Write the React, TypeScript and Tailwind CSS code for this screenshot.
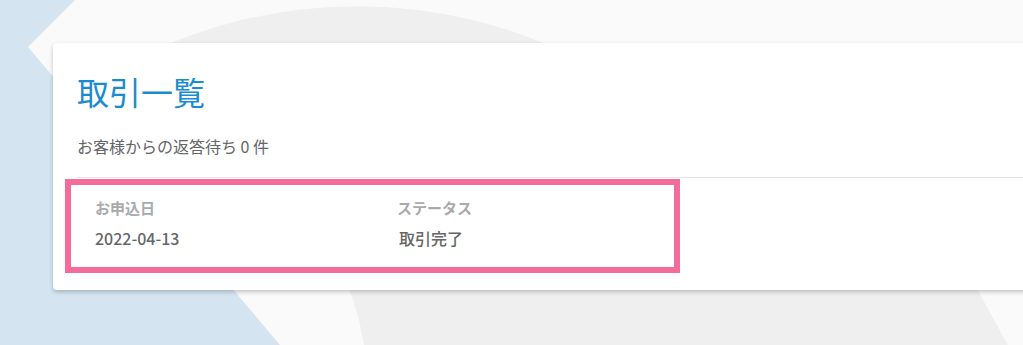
import React from 'react';

const font = { fontFamily: '"Noto Sans CJK JP", "Noto Sans", sans-serif' };

// Decorative background shapes behind the card
const Backdrop: React.FC = () => (
  <svg className="absolute inset-0" width="1023" height="345" viewBox="0 0 1023 345">
    <rect width="1023" height="345" fill="#d4e5f1" />
    <polygon points="75,0 1023,0 1023,345 280,345 28,47" fill="#fafafa" />
    <path d="M 134 60 A 489 489 0 0 1 580 60 Z" fill="#efefef" />
    <path d="M 345 280 L 972 280 L 1008 345 L 364 345 Q 357 305 345 280 Z" fill="#efefef" />
  </svg>
);

const App: React.FC = () => {
  const rows = [{ date: '2022-04-13', status: '取引完了' }];

  return (
    <div className="relative w-full h-[345px] overflow-hidden" style={font}>
      <Backdrop />

      <div className="relative ml-[53px] pt-[43px]">
        <div className="w-[1010px] bg-white rounded-[4px] shadow-[0_2px_4px_rgba(0,0,0,0.22)] pt-[24px] pb-[17px]">
          <h1 className="pl-6 text-[32px] leading-[48px] font-normal text-[#1b8bd0]">取引一覧</h1>
          <p className="pl-6 mt-[19px] text-[16px] leading-[24px] text-[#666]">お客様からの返答待ち 0 件</p>

          <div className="ml-6 mt-[19px] h-px bg-[#e6e6e6]" />

          {rows.map((r) => (
            <div
              key={r.date}
              className="ml-[12px] mt-px w-[615px] h-[94px] border-[6px] border-[#f56c9b] pl-6 pt-[13px] flex"
            >
              <div className="w-[302px]">
                <div className="text-[15px] leading-[20px] font-bold text-[#aaa]">お申込日</div>
                <div className="mt-[8px] text-[16px] leading-[24px] font-medium text-[#666]">{r.date}</div>
              </div>
              <div>
                <div className="text-[15px] leading-[20px] font-bold text-[#aaa]">ステータス</div>
                <div className="mt-[8px] pl-[2px] text-[16px] leading-[24px] font-medium text-[#666]">{r.status}</div>
              </div>
            </div>
          ))}
        </div>
      </div>
    </div>
  );
};

export default App;
